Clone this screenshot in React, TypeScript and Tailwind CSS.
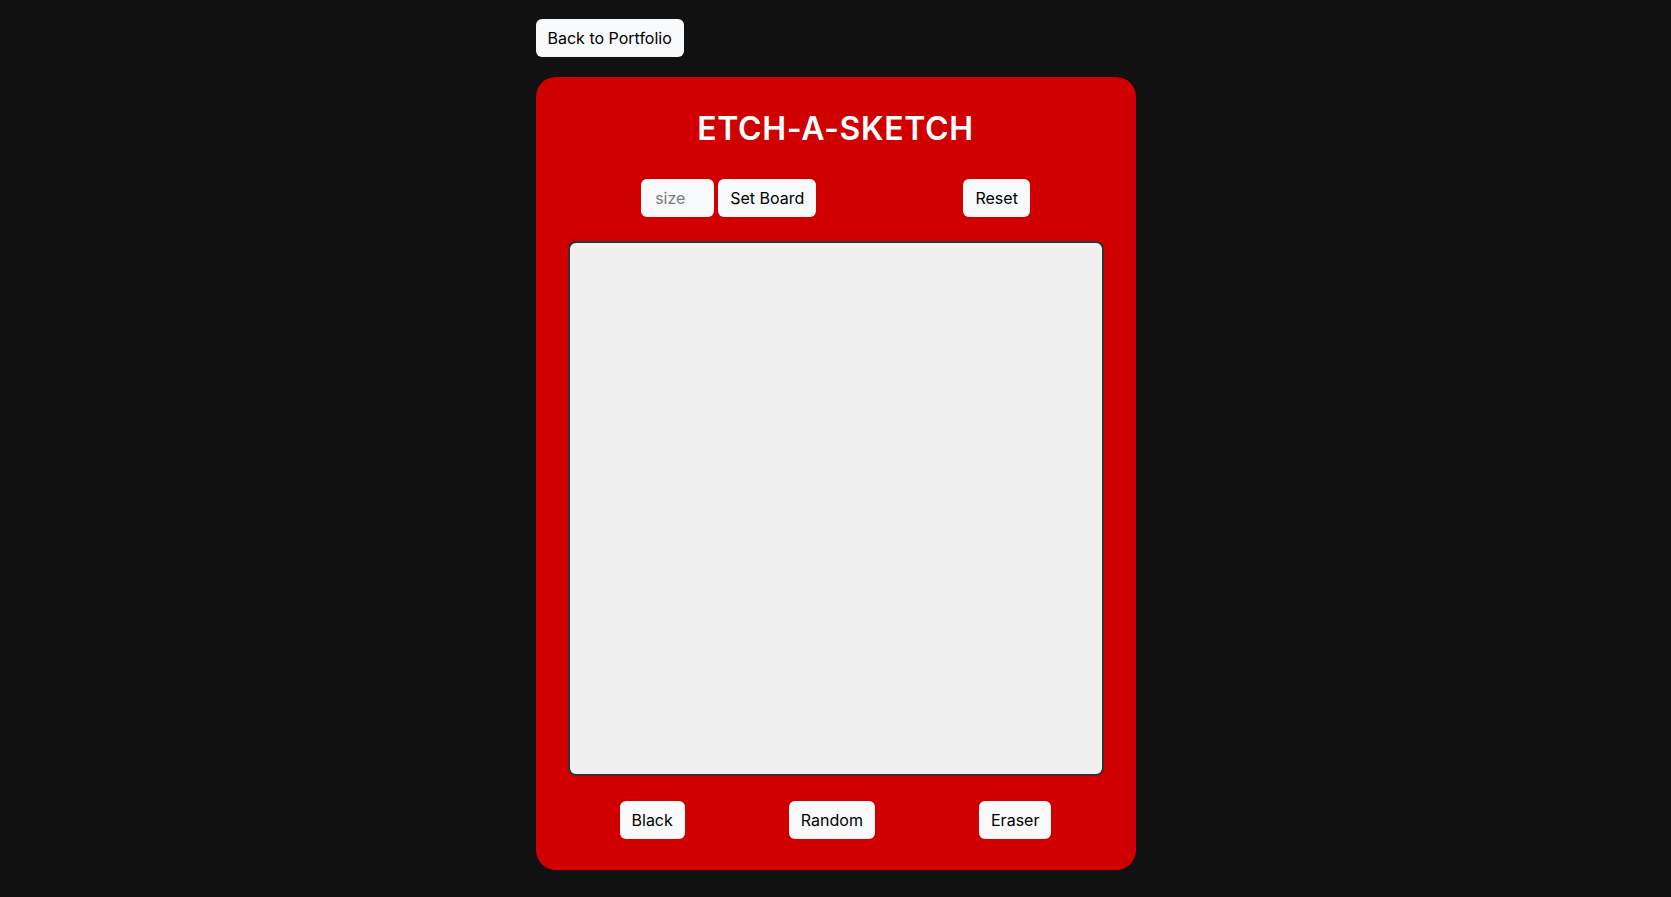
import React, { useState } from "react";

const btn =
    "h-[38px] px-3 rounded-md bg-[#f8f9fa] text-black text-[16px] leading-none";

const App: React.FC = () => {
    const [size, setSize] = useState("");

    return (
        <div
            className="min-h-screen bg-[#111111] pt-[19px]"
            style={{ fontFamily: "Inter, 'Noto Sans', sans-serif" }}
        >
            <div className="w-[600px] mx-auto">
                {/* Back link */}
                <button className={btn}>Back to Portfolio</button>

                {/* Card */}
                <div className="mt-[20px] bg-[#d10000] rounded-[20px] px-8 pt-8 pb-[31px]">
                    <h1 className="text-center text-white text-[32px] font-semibold tracking-[0.02em] leading-[39px]">
                        ETCH-A-SKETCH
                    </h1>

                    <div className="mt-[31px] flex justify-around items-center">
                        <div className="flex gap-[4px]">
                            <input
                                value={size}
                                onChange={(e) => setSize(e.target.value)}
                                placeholder="size"
                                className="w-[73px] h-[38px] rounded-md bg-[#f8f9fa] px-[14px] text-[16px] text-black placeholder:text-[#7b7b7b] outline-none"
                            />
                            <button className={btn}>Set Board</button>
                        </div>
                        <button className={btn}>Reset</button>
                    </div>

                    {/* Board */}
                    <div className="mt-[24px] w-[536px] h-[535px] bg-[#f0f0f0] border-2 border-[#333333] rounded-lg"></div>

                    {/* Colour modes */}
                    <div className="mt-[25px] flex justify-around">
                        <button className={btn}>Black</button>
                        <button className={btn}>Random</button>
                        <button className={btn}>Eraser</button>
                    </div>
                </div>
            </div>
        </div>
    );
};

export default App;
